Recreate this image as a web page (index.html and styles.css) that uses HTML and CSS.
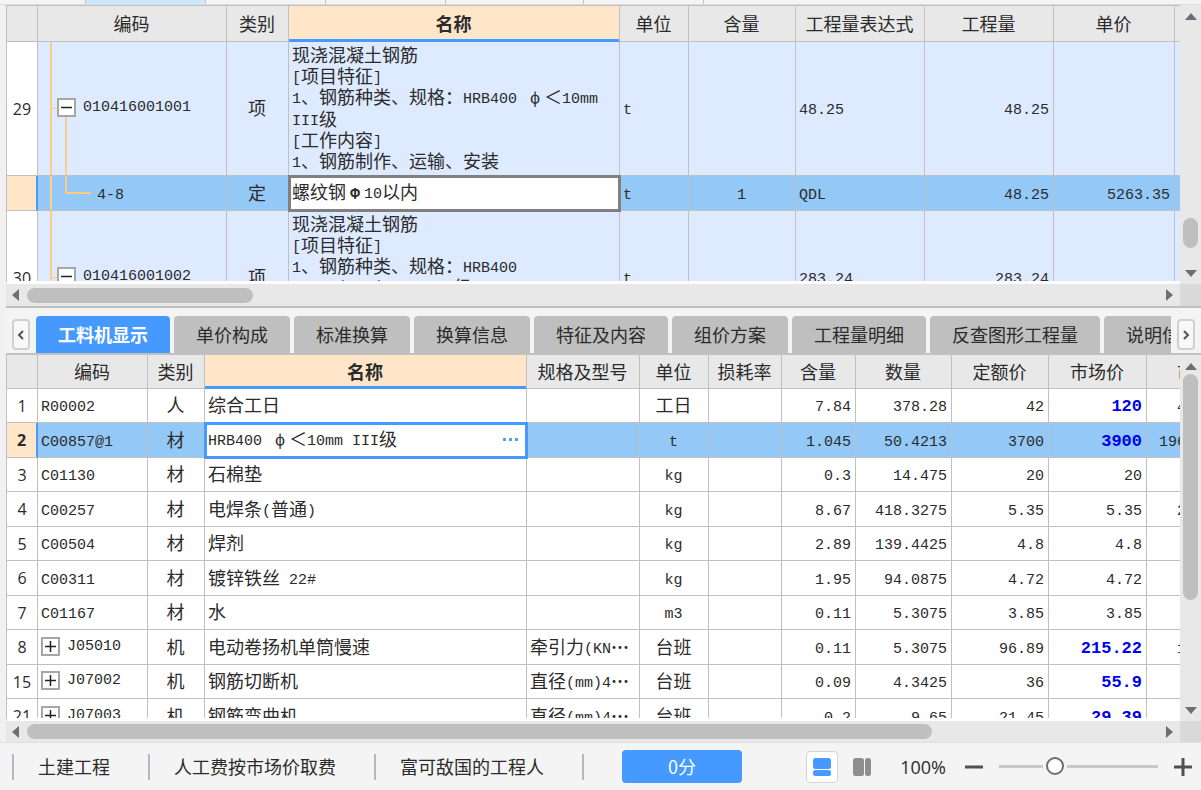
FILE: index.html
```html
<!DOCTYPE html>
<html lang="zh-CN">
<head>
<meta charset="utf-8">
<title>工程计价</title>
<link rel="stylesheet" href="styles.css">
</head>
<body>
<div class="strip" aria-hidden="true"><i class="s0"></i><i class="s1"></i><i class="s2"></i><i class="s2"></i><i class="s3"></i><i class="s2"></i></div>
<main class="main">
<section class="pane pane-top">
<div class="view">
<table class="grid">
<colgroup><col class="w31"><col class="w189"><col class="w62"><col><col class="w69"><col class="w107"><col class="w129"><col class="w129"><col class="w121"><col class="w100"></colgroup>
<thead><tr><th></th><th>编码</th><th>类别</th><th class="cur">名称</th><th>单位</th><th>含量</th><th>工程量表达式</th><th>工程量</th><th>单价</th><th></th></tr></thead>
<tbody>
<tr class="item"><th>29</th><td class="tree parent"><div class="node"><button class="toggle" aria-label="折叠"><svg viewBox="0 0 15 15"><path d="M2 7.5h11"/></svg></button><span class="a">010416001001</span></div></td><td class="c">项</td>
<td class="desc">现浇混凝土钢筋<br><span class="a">[</span>项目特征<span class="a">]</span><br><span class="a">1</span>、钢筋种类、规格：<span class="a">HRB400 </span><span class="f">ф</span>＜<span class="a">10mm</span><br><span class="a">III</span>级<br><span class="a">[</span>工作内容<span class="a">]</span><br><span class="a">1</span>、钢筋制作、运输、安装</td>
<td><span class="a">t</span></td><td></td><td><span class="a">48.25</span></td><td class="r"><span class="a">48.25</span></td><td></td><td></td></tr>
<tr class="sub sel"><th></th><td class="tree child"><span class="a">4-8</span></td><td class="c">定</td><td class="active">螺纹钢<span class="f b">Φ</span><span class="a">10</span>以内</td><td><span class="a">t</span></td><td class="c"><span class="a">1</span></td><td><span class="a">QDL</span></td><td class="r"><span class="a">48.25</span></td><td class="r"><span class="a">5263.35</span></td><td></td></tr>
<tr class="item"><th>30</th><td class="tree parent"><div class="node"><button class="toggle" aria-label="折叠"><svg viewBox="0 0 15 15"><path d="M2 7.5h11"/></svg></button><span class="a">010416001002</span></div></td><td class="c">项</td>
<td class="desc">现浇混凝土钢筋<br><span class="a">[</span>项目特征<span class="a">]</span><br><span class="a">1</span>、钢筋种类、规格：<span class="a">HRB400</span><br><span class="a">10mm</span>＜<span class="f">ф</span>＜<span class="a">28mm III</span>级<br><span class="a">[</span>工作内容<span class="a">]</span><br><span class="a">1</span>、钢筋制作、运输、安装</td>
<td><span class="a">t</span></td><td></td><td><span class="a">283.24</span></td><td class="r"><span class="a">283.24</span></td><td></td><td></td></tr>
</tbody>
</table>
</div>
<div class="vbar"><svg class="arr" viewBox="0 0 12 7"><path d="M0 7L6 0l6 7z"/></svg><div class="track"><div class="thumb vt-top"></div></div><svg class="arr" viewBox="0 0 12 7"><path d="M0 0h12L6 7z"/></svg></div>
<div class="hbar"><svg class="harr" viewBox="0 0 7 12"><path d="M7 0v12L0 6z"/></svg><div class="track"><div class="thumb ht-top"></div></div><svg class="harr" viewBox="0 0 7 12"><path d="M0 0l7 6-7 6z"/></svg></div>
<div class="corner"></div>
</section>
<nav class="tabs">
<button class="step" aria-label="向左"><svg viewBox="0 0 8 10"><path d="M6 1L2 5l4 4"/></svg></button>
<div class="tablist"><button class="tab on">工料机显示</button><button class="tab">单价构成</button><button class="tab">标准换算</button><button class="tab">换算信息</button><button class="tab">特征及内容</button><button class="tab">组价方案</button><button class="tab">工程量明细</button><button class="tab">反查图形工程量</button><button class="tab">说明信息</button></div>
<button class="step" aria-label="向右"><svg viewBox="0 0 8 10"><path d="M2 1l4 4-4 4"/></svg></button>
</nav>
<section class="pane pane-bottom">
<div class="view">
<table class="grid detail">
<colgroup><col class="w31"><col class="w110"><col class="w57"><col><col class="w113"><col class="w69"><col class="w73"><col class="w74"><col class="w96"><col class="w97"><col class="w98"><col class="w98"></colgroup>
<thead><tr><th></th><th>编码</th><th>类别</th><th class="cur">名称</th><th>规格及型号</th><th>单位</th><th>损耗率</th><th>含量</th><th>数量</th><th>定额价</th><th>市场价</th><th>市价</th></tr></thead>
<tbody>
<tr><th>1</th><td><span class="a">R00002</span></td><td class="c">人</td><td>综合工日</td><td></td><td class="c">工日</td><td></td><td class="r"><span class="a">7.84</span></td><td class="r"><span class="a">378.28</span></td><td class="r"><span class="a">42</span></td><td class="r hot"><span class="a">120</span></td><td class="r"><span class="a">45393.6</span></td></tr>
<tr class="sel"><th>2</th><td><span class="a">C00857@1</span></td><td class="c">材</td><td class="active blue"><div class="edit"><span><span class="a">HRB400 </span><span class="f">ф</span>＜<span class="a">10mm III</span>级</span><button class="more" aria-label="更多"><svg viewBox="0 0 17 3"><path d="M1 0h3v3H1zM7 0h3v3H7zM13 0h3v3h-3z"/></svg></button></div></td><td></td><td class="c"><span class="a">t</span></td><td></td><td class="r"><span class="a">1.045</span></td><td class="r"><span class="a">50.4213</span></td><td class="r"><span class="a">3700</span></td><td class="r hot"><span class="a">3900</span></td><td class="r"><span class="a">196643.07</span></td></tr>
<tr><th>3</th><td><span class="a">C01130</span></td><td class="c">材</td><td>石棉垫</td><td></td><td class="c"><span class="a">kg</span></td><td></td><td class="r"><span class="a">0.3</span></td><td class="r"><span class="a">14.475</span></td><td class="r"><span class="a">20</span></td><td class="r"><span class="a">20</span></td><td class="r"><span class="a">289.5</span></td></tr>
<tr><th>4</th><td><span class="a">C00257</span></td><td class="c">材</td><td>电焊条<span class="a">(</span>普通<span class="a">)</span></td><td></td><td class="c"><span class="a">kg</span></td><td></td><td class="r"><span class="a">8.67</span></td><td class="r"><span class="a">418.3275</span></td><td class="r"><span class="a">5.35</span></td><td class="r"><span class="a">5.35</span></td><td class="r"><span class="a">2238.05</span></td></tr>
<tr><th>5</th><td><span class="a">C00504</span></td><td class="c">材</td><td>焊剂</td><td></td><td class="c"><span class="a">kg</span></td><td></td><td class="r"><span class="a">2.89</span></td><td class="r"><span class="a">139.4425</span></td><td class="r"><span class="a">4.8</span></td><td class="r"><span class="a">4.8</span></td><td class="r"><span class="a">669.32</span></td></tr>
<tr><th>6</th><td><span class="a">C00311</span></td><td class="c">材</td><td>镀锌铁丝<span class="a"> 22#</span></td><td></td><td class="c"><span class="a">kg</span></td><td></td><td class="r"><span class="a">1.95</span></td><td class="r"><span class="a">94.0875</span></td><td class="r"><span class="a">4.72</span></td><td class="r"><span class="a">4.72</span></td><td class="r"><span class="a">444.09</span></td></tr>
<tr><th>7</th><td><span class="a">C01167</span></td><td class="c">材</td><td>水</td><td></td><td class="c"><span class="a">m3</span></td><td></td><td class="r"><span class="a">0.11</span></td><td class="r"><span class="a">5.3075</span></td><td class="r"><span class="a">3.85</span></td><td class="r"><span class="a">3.85</span></td><td class="r"><span class="a">20.43</span></td></tr>
<tr><th>8</th><td><div class="node"><button class="toggle" aria-label="展开"><svg viewBox="0 0 15 15"><path d="M2 7.5h11M7.5 2v11"/></svg></button><span class="a">J05010</span></div></td><td class="c">机</td><td>电动卷扬机单筒慢速</td><td>牵引力<span class="a">(KN</span><span class="dots">⋯</span></td><td class="c">台班</td><td></td><td class="r"><span class="a">0.11</span></td><td class="r"><span class="a">5.3075</span></td><td class="r"><span class="a">96.89</span></td><td class="r hot"><span class="a">215.22</span></td><td class="r"><span class="a">1142.28</span></td></tr>
<tr><th>15</th><td><div class="node"><button class="toggle" aria-label="展开"><svg viewBox="0 0 15 15"><path d="M2 7.5h11M7.5 2v11"/></svg></button><span class="a">J07002</span></div></td><td class="c">机</td><td>钢筋切断机</td><td>直径<span class="a">(mm)4</span><span class="dots">⋯</span></td><td class="c">台班</td><td></td><td class="r"><span class="a">0.09</span></td><td class="r"><span class="a">4.3425</span></td><td class="r"><span class="a">36</span></td><td class="r hot"><span class="a">55.9</span></td><td class="r"><span class="a">242.75</span></td></tr>
<tr><th>21</th><td><div class="node"><button class="toggle" aria-label="展开"><svg viewBox="0 0 15 15"><path d="M2 7.5h11M7.5 2v11"/></svg></button><span class="a">J07003</span></div></td><td class="c">机</td><td>钢筋弯曲机</td><td>直径<span class="a">(mm)4</span><span class="dots">⋯</span></td><td class="c">台班</td><td></td><td class="r"><span class="a">0.2</span></td><td class="r"><span class="a">9.65</span></td><td class="r"><span class="a">21.45</span></td><td class="r hot"><span class="a">29.39</span></td><td class="r"><span class="a">283.61</span></td></tr>
</tbody>
</table>
</div>
<div class="vbar"><svg class="arr" viewBox="0 0 12 7"><path d="M0 7L6 0l6 7z"/></svg><div class="track"><div class="thumb vt-bottom"></div></div><svg class="arr" viewBox="0 0 12 7"><path d="M0 0h12L6 7z"/></svg></div>
<div class="hbar"><svg class="harr" viewBox="0 0 7 12"><path d="M7 0v12L0 6z"/></svg><div class="track"><div class="thumb ht-bottom"></div></div><svg class="harr" viewBox="0 0 7 12"><path d="M0 0l7 6-7 6z"/></svg></div>
<div class="corner"></div>
</section>
</main>
<footer class="status">
<span class="info">土建工程</span><span class="info">人工费按市场价取费</span><span class="info">富可敌国的工程人</span><span class="info last"></span>
<button class="score">0分</button>
<div class="tools">
<button class="mode on" aria-label="上下布局"><svg viewBox="0 0 18 18"><rect width="18" height="11" rx="2.5"/><rect y="12" width="18" height="6" rx="2.5"/></svg></button>
<button class="mode" aria-label="左右布局"><svg viewBox="0 0 18 18"><rect width="11" height="18" rx="2.5"/><rect x="12" width="6" height="18" rx="2.5"/></svg></button>
<label class="pct" for="zoom">100%</label>
<button class="pm" aria-label="缩小"><svg viewBox="0 0 18 18"><path d="M0 9h18"/></svg></button>
<input class="slider" id="zoom" type="range" min="0" max="100" value="33">
<button class="pm" aria-label="放大"><svg viewBox="0 0 18 18"><path d="M0 9h18M9 0v18"/></svg></button>
</div>
</footer>
</body>
</html>
```
FILE: styles.css
```css
* { box-sizing: border-box; }
body {
  margin: 0;
  height: 100vh;
  display: flex;
  flex-direction: column;
  overflow: hidden;
  background: #f4f4f4;
  color: #2b2b2b;
  font: 18px/21px "Noto Sans CJK SC", sans-serif;
}
button { border: 0; padding: 0; margin: 0; background: none; font: inherit; color: inherit; }
svg { display: block; }

.strip { flex: none; display: flex; height: 5px; border-bottom: 1px solid #dcdcdc; }
.strip i { flex: none; border-right: 1px solid #c4c4c4; }
.s0 { width: 86px; }
.s1 { width: 120px; background: #cce8ff; }
.s2 { width: 120px; }
.s3 { width: 138px; }

.main { flex: 1; min-height: 0; display: flex; flex-direction: column; padding-left: 6px; background: #f1f1f1; }
.pane { display: grid; grid-template-columns: minmax(0, 1fr) 21px; min-height: 0; }
.pane-top { flex: 301 0 0; grid-template-rows: minmax(0, 1fr) 22px; border-bottom: 2px solid #c0c0c0; }
.pane-bottom { flex: 387 0 0; grid-template-rows: minmax(0, 1fr) 21px; }
.view { overflow: hidden; border-bottom: 3px solid #fff; border-left: 1px solid #c0c0c0; background: #fff; }
.pane-top .view { border-top: 1px solid #c0c0c0; }

.grid { table-layout: fixed; width: calc(100% + 95px); border-collapse: separate; border-spacing: 0; }
.detail { width: calc(100% + 65px); }
.w31 { width: 31px; } .w57 { width: 57px; } .w62 { width: 62px; } .w69 { width: 69px; }
.w73 { width: 73px; } .w74 { width: 74px; } .w96 { width: 96px; } .w97 { width: 97px; }
.w98 { width: 98px; } .w100 { width: 100px; } .w107 { width: 107px; } .w110 { width: 110px; }
.w113 { width: 113px; } .w121 { width: 121px; } .w129 { width: 129px; } .w189 { width: 189px; }
.grid th, .grid td {
  border: solid #c0c0c0;
  border-width: 0 1px 1px 0;
  padding: 0 4px 0 3px;
  text-align: left;
  vertical-align: middle;
  white-space: nowrap;
  overflow: hidden;
}
.grid td { position: relative; padding-bottom: 2px; }
.grid thead th { height: 36px; background: #e8e8e8; font-weight: 400; text-align: center; }
.grid thead .cur { background: #ffe6c8; font-weight: 700; border-bottom-color: #4599ff; box-shadow: inset 0 -2px #4599ff; }
.grid tbody th { padding: 0; text-align: center; font: 16px/20px "Open Sans", sans-serif; }
.grid .c { text-align: center; }
.grid .r { text-align: right; }
.item { height: 134px; }
.item td { background-color: #deeaff; }
.sub { height: 35px; }
.detail tbody tr { height: 35px; }
.detail tbody tr:nth-child(odd), .detail thead th { height: 34px; }
.grid .sel td { background-color: #93c8f7; }
.grid .sel th { background: #ffe6c8; border-right: 2px solid #4599ff; font-weight: 700; }
.grid td.active { background: #fff; outline: 3px solid #808080; outline-offset: -2px; z-index: 1; }
.grid td.blue { outline-color: #4599ff; }
.grid .hot { color: #0000f0; font-weight: 700; }
.a { font-family: "Liberation Mono", monospace; font-size: 15px; line-height: 15px; vertical-align: 1px; white-space: pre; }
.hot .a { font-size: 17px; line-height: 17px; }
.f { display: inline-block; width: 18px; text-align: center; font: 16px/16px "Liberation Mono", monospace; vertical-align: baseline; }
.b { font-weight: 700; }
.dots { display: inline-block; width: 18px; font-weight: 700; }

.node { display: flex; align-items: center; gap: 7px; }
.toggle { width: 19px; height: 19px; border: 2px solid #a6a6a6; background: #fff; }
.toggle svg { width: 15px; height: 15px; fill: none; stroke: #222; stroke-width: 1.5; }
.grid .tree { background-repeat: no-repeat; }
.grid .parent {
  padding-left: 19px;
  background-image: linear-gradient(#ffcc85, #ffcc85), linear-gradient(#ffcc85, #ffcc85), linear-gradient(#ffcc85, #ffcc85);
  background-size: 2px 100%, 6px 1px, 2px 50%;
  background-position: 12px 0, 13px 50%, 27px 100%;
}
.grid .child {
  padding-left: 59px;
  background-image: linear-gradient(#ffcc85, #ffcc85), linear-gradient(#ffcc85, #ffcc85), linear-gradient(#ffcc85, #ffcc85);
  background-size: 2px 100%, 2px 50%, 26px 2px;
  background-position: 12px 0, 27px 0, 27px 50%;
}
.edit { display: flex; align-items: center; justify-content: space-between; }
.more { width: 17px; margin-right: 3px; }
.more svg { width: 17px; height: 3px; fill: #5ba3e0; }

.vbar { display: flex; flex-direction: column; align-items: center; padding: 8px 0 7px; background: #e8e8e8; }
.hbar { display: flex; align-items: center; padding: 0 7px 0 6px; gap: 8px; background: #e8e8e8; }
.track { flex: 1; align-self: stretch; display: flex; align-items: center; }
.vbar .track { flex-direction: column; align-self: center; width: 15px; }
.arr { width: 12px; height: 7px; fill: #6e6e78; }
.harr { width: 7px; height: 12px; fill: #6e6e78; }
.thumb { border-radius: 8px; background: #bfbfbf; }
.vbar .thumb { width: 15px; }
.hbar .thumb { height: 15px; }
.vt-top { height: 12%; margin-top: 198px; }
.vt-bottom { height: 67%; margin-top: 4px; }
.ht-top { width: 20%; }
.ht-bottom { width: 80%; }
.corner { background: #d9d9d9; }

.tabs { flex: none; display: flex; gap: 6px; align-items: center; height: 47px; padding: 0 6px; border-bottom: 2px solid #c0c0c0; background: #f4f4f4; }
.tablist { flex: 1; min-width: 0; display: flex; gap: 4px; align-self: flex-end; overflow: hidden; }
.tab { flex: none; height: 37px; padding: 0 22px; border-radius: 4px 4px 0 0; background: #bfbfbf; }
.tab.on { background: #4599ff; color: #fff; font-weight: 700; }
.step { flex: none; display: grid; place-items: center; width: 18px; height: 31px; margin-top: 8px; border: 2px solid #d0d0d0; border-radius: 4px; background: #f8f8f8; }
.step svg { width: 8px; height: 10px; fill: none; stroke: #555; stroke-width: 2; }

.status { flex: none; display: flex; align-items: center; height: 48px; padding: 0 9px 0 12px; border-top: 1px solid #dedede; background: #f4f4f4; }
.info { height: 26px; padding: 0 38px 0 24px; border-left: 2px solid #b4b8c0; line-height: 24px; white-space: nowrap; }
.info.last { padding: 0 19px; }
.score { width: 120px; height: 33px; border-radius: 4px; background: #4599ff; color: #fff; }
.tools { margin-left: auto; display: flex; align-items: center; }
.mode { display: grid; place-items: center; width: 32px; height: 32px; margin-right: 8px; border-radius: 4px; fill: #8e8e8e; }
.mode.on { border: 1px solid #d4d4d4; background: #fff; fill: #4599ff; }
.mode svg { width: 18px; height: 18px; }
.pct { margin: 0 19px 0 14px; font: 18px/24px "Open Sans", sans-serif; }
.pm svg { width: 18px; height: 18px; fill: none; stroke: #505050; stroke-width: 3; }
.slider { appearance: none; width: 159px; height: 20px; margin: 0 16px; background: none; }
.slider::-webkit-slider-runnable-track { height: 3px; background: #c9c9c9; }
.slider::-webkit-slider-thumb { appearance: none; width: 18px; height: 18px; margin-top: -8px; border: 2px solid #6e6e6e; border-radius: 50%; background: #fff; box-shadow: 0 0 0 3px #f4f4f4; }
```
